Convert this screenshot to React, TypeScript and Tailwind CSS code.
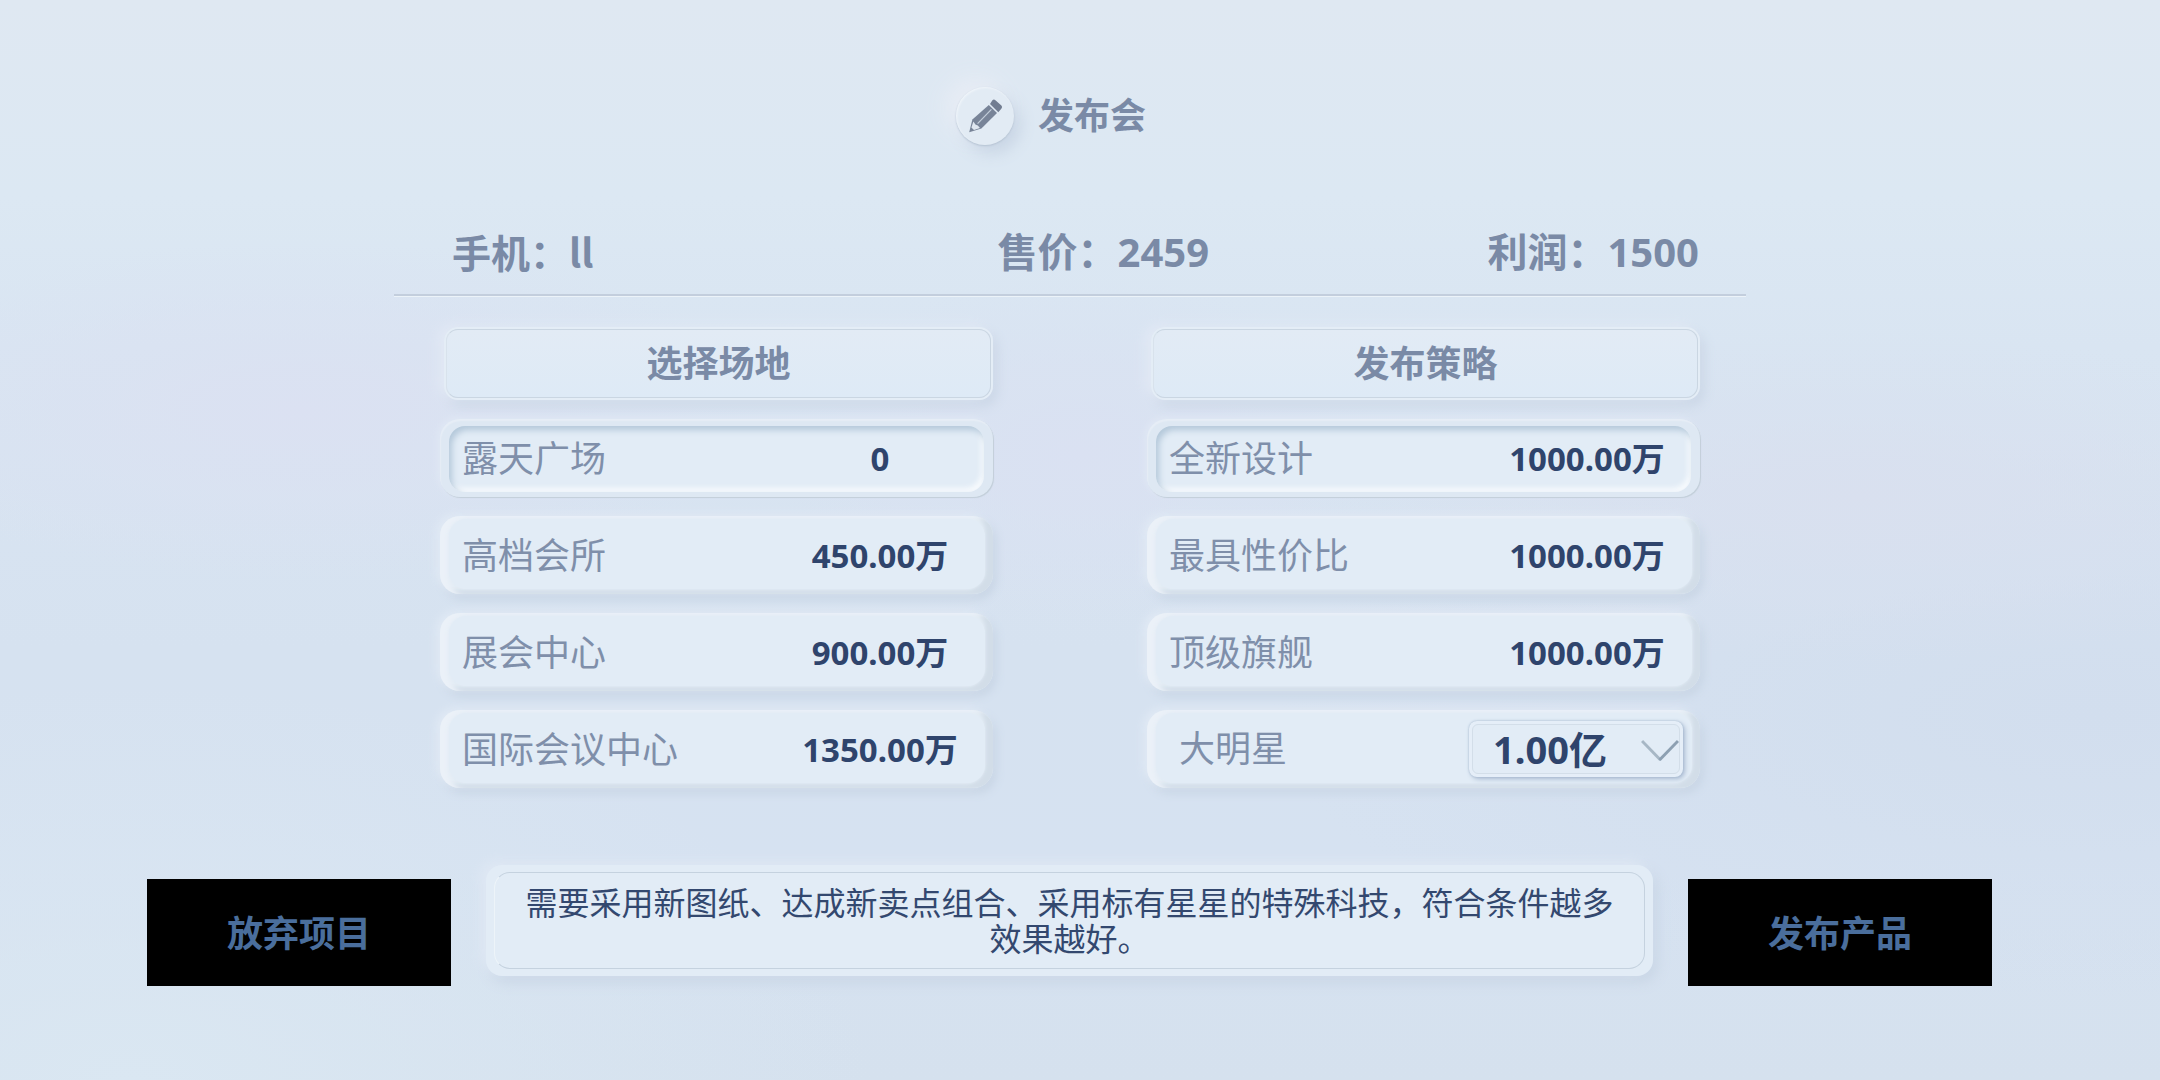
import { useState } from "react";
import clsx from "clsx";

type Option = {
  name: string;
  cost: string;
};

const venues: Option[] = [
  { name: "露天广场", cost: "0" },
  { name: "高档会所", cost: "450.00万" },
  { name: "展会中心", cost: "900.00万" },
  { name: "国际会议中心", cost: "1350.00万" },
];

const strategies: Option[] = [
  { name: "全新设计", cost: "1000.00万" },
  { name: "最具性价比", cost: "1000.00万" },
  { name: "顶级旗舰", cost: "1000.00万" },
];

const starFees = ["1.00亿", "2.00亿", "3.00亿"];

const raisedFrame =
  "rounded-[20px] bg-[#e3ecf5] shadow-[inset_8px_2px_4px_#ebf1f8,inset_-8px_-4px_4px_#d2dde8,-4px_-2px_8px_#e1eaf5,3px_5px_10px_#c7d4e4]";

const raisedFace =
  "absolute top-[3px] right-2 bottom-[5px] left-[9px] rounded-[18px] bg-[#e2ecf6] shadow-[0_0_2px_#e2ecf6]";

const pressedFrame =
  "rounded-[20px] bg-[#dee8f3] shadow-[inset_1px_2px_1px_#e6edf6,1px_1px_1px_#c2ced9,-3px_-2px_6px_#dfe7f4]";

const pressedFace =
  "absolute inset-x-[9px] top-[7px] bottom-[5px] rounded-[16px] bg-[#e2ecf6] shadow-[inset_3px_4px_6px_#b4c8da,inset_-3px_-4px_5px_#f7fafd]";

function PencilIcon() {
  return (
    <svg viewBox="0 0 58 58" className="size-full" aria-hidden="true">
      <path
        d="M36.4 13.2Q37.9 11.8 39.4 13.2L45.4 18.6Q46.8 20 45.5 21.6L42.3 25.2L34 17Z"
        fill="#727d91"
      />
      <path d="M32.8 18L41 26L25.4 41.4L13.2 45.2L16.4 32.4Z" fill="#788498" />
      <path d="M17.4 34.6L19.4 37.6L21.8 38.6L24 41L18 42.9L15.4 40.6Z" fill="#dfe7f0" />
      <path d="M21.6 36.6L35.4 22.4" stroke="#c3ceda" strokeWidth="1.2" fill="none" />
    </svg>
  );
}

function SectionTitle({ children }: { children: string }) {
  return (
    <h2 className="h-[73px] rounded-[14px] border-2 border-[#e4edf6] shadow-[-6px_-2px_12px_#e2e9f5,4px_6px_12px_#cad6e6]">
      <span className="flex h-full items-center justify-center rounded-xl border border-[#cad6e2] border-l-[#d8e2ec] bg-linear-to-b from-[#e2ebf5] to-[#deeaf6] text-4xl font-bold text-[#7a8aa6]">
        {children}
      </span>
    </h2>
  );
}

type OptionRowProps = {
  option: Option;
  selected: boolean;
  onSelect: () => void;
};

function OptionRow({ option, selected, onSelect }: OptionRowProps) {
  return (
    <button
      type="button"
      aria-pressed={selected}
      onClick={onSelect}
      className={clsx(
        "relative flex h-[78px] w-full items-center justify-between pt-0.5 pl-[22px]",
        selected ? pressedFrame : raisedFrame,
      )}
    >
      <span className={selected ? pressedFace : raisedFace} />
      <span className="relative text-4xl text-[#7f8faa]">{option.name}</span>
      <span className="relative w-[226px] text-center text-[33px] font-bold text-[#2f446c]">
        {option.cost}
      </span>
    </button>
  );
}

export default function App() {
  const [venue, setVenue] = useState("露天广场");
  const [strategy, setStrategy] = useState("全新设计");
  const [fee, setFee] = useState(starFees[0]);

  return (
    <main className="min-h-screen bg-[#d8e3f1] bg-[radial-gradient(ellipse_at_14%_38%,#dbe1f2_0%,transparent_18%),radial-gradient(ellipse_at_50%_42%,#dae1f2_0%,transparent_20%),radial-gradient(ellipse_at_86%_46%,#d9e0ef_0%,transparent_20%),radial-gradient(ellipse_at_97%_66%,#d2deee_0%,transparent_28%),radial-gradient(ellipse_at_6%_100%,#dae7f2_0%,transparent_26%),linear-gradient(180deg,#dfe8f2_0%,#dce8f3_18%,#d9e5f2_32%,#d6e2f0_60%,#d6e2f1_80%,#d5e1ee_100%)] pt-[87px] pr-5 font-['Noto_Sans','Noto_Sans_CJK_SC',sans-serif]">
      <header className="flex items-center justify-center gap-6 pr-[38px]">
        <div className="size-[58px] rounded-full bg-[#e2ebf4] shadow-[inset_1px_1px_2px_#f0f5fa,0_1px_2px_#b4c2d2,-10px_-8px_24px_#e9edf5,6px_8px_16px_#c6d3e3]">
          <PencilIcon />
        </div>
        <h1 className="text-4xl font-bold text-[#7a8aa6]">发布会</h1>
      </header>

      <div className="mx-auto mt-[77px] max-w-[1352px]">
        <div className="grid grid-cols-[7fr_9fr] items-start border-b-2 border-[#c3cedd] pr-[47px] pb-3 pl-[58px] text-[40px] leading-[60px] font-bold text-[#7a8aa6] shadow-[0_1px_0_#ecf3f9]">
          <p className="font-['Noto_Sans_CJK_SC',sans-serif] text-[39px] leading-[58px]">手机：ll</p>
          <div className="flex justify-between">
            <p>售价：2459</p>
            <p>利润：1500</p>
          </div>
        </div>

        <div className="mt-[31px] grid grid-cols-2 gap-[154px] px-[46px]">
          <section>
            <div className="pl-1">
              <SectionTitle>选择场地</SectionTitle>
            </div>
            <div className="mt-[19px] flex flex-col gap-[19px]">
              {venues.map((option) => (
                <OptionRow
                  key={option.name}
                  option={option}
                  selected={venue === option.name}
                  onSelect={() => setVenue(option.name)}
                />
              ))}
            </div>
          </section>

          <section>
            <div className="pl-1">
              <SectionTitle>发布策略</SectionTitle>
            </div>
            <div className="mt-[19px] flex flex-col gap-[19px]">
              {strategies.map((option) => (
                <OptionRow
                  key={option.name}
                  option={option}
                  selected={strategy === option.name}
                  onSelect={() => setStrategy(option.name)}
                />
              ))}
              <div
                className={clsx(
                  "relative flex h-[78px] items-center justify-between pr-[17px] pl-8",
                  raisedFrame,
                )}
              >
                <span className={raisedFace} />
                <label htmlFor="star-fee" className="relative text-4xl text-[#7f8faa]">
                  大明星
                </label>
                <div className="relative h-14 w-[214px] rounded-lg bg-[#e5eef8] p-[3px] shadow-[0_0_2px_#9fb3c9,2px_2px_5px_#a9bad2]">
                  <select
                    id="star-fee"
                    value={fee}
                    onChange={(e) => setFee(e.target.value)}
                    className="size-full appearance-none rounded-md border border-[#d3dee9] bg-[#e2ecf6] pl-5 text-[38px] leading-[48px] font-bold text-[#2f446c]"
                  >
                    {starFees.map((value) => (
                      <option key={value}>{value}</option>
                    ))}
                  </select>
                  <svg
                    viewBox="0 0 38 24"
                    className="pointer-events-none absolute top-[18px] right-1 h-6 w-[38px]"
                    aria-hidden="true"
                  >
                    <path d="M1 2L19.5 21" stroke="#a7b7c5" strokeWidth="3" fill="none" />
                    <path d="M18.5 21L37 2" stroke="#8da0b2" strokeWidth="3" fill="none" />
                  </svg>
                </div>
              </div>
            </div>
          </section>
        </div>
      </div>

      <footer className="mt-[77px] flex items-end gap-[35px] pr-[148px] pb-24 pl-[147px]">
        <button type="button" className="h-[107px] w-[304px] bg-black pt-0.5 text-4xl font-bold text-[#4a6e9c]">
          放弃项目
        </button>
        <div className="mb-2.5 flex-1 rounded-2xl bg-[#e2ecf6] px-2 py-[7px] shadow-[-6px_-4px_12px_#dfe8f4,4px_6px_14px_#c8d5e5]">
          <p className="rounded-2xl border border-[#c5d2df] border-l-[#edf4f9] px-6 pt-3 pb-[11px] text-center text-[32px] leading-9 text-[#33486f]">
            需要采用新图纸、达成新卖点组合、采用标有星星的特殊科技，符合条件越多效果越好。
          </p>
        </div>
        <button type="button" className="h-[107px] w-[304px] bg-black pt-0.5 text-4xl font-bold text-[#4a6e9c]">
          发布产品
        </button>
      </footer>
    </main>
  );
}
